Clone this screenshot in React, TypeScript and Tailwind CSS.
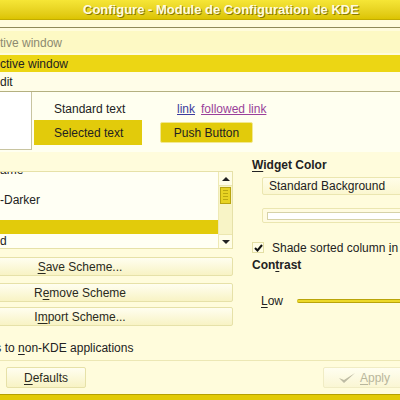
import React from "react";

const font = { fontFamily: '"Liberation Sans", Arial, sans-serif' };

function U({ children }: { children: React.ReactNode }) {
  return <span className="underline underline-offset-2">{children}</span>;
}

function KButton({ children, className = "" }: { children: React.ReactNode; className?: string }) {
  return (
    <div
      className={`flex items-center justify-center rounded-[2px] border border-[#e6e1a8] bg-gradient-to-b from-[#fffef0] to-[#f8f3c4] text-[#2a2a20] ${className}`}
    >
      <span>{children}</span>
    </div>
  );
}

export default function App() {
  return (
    <div className="w-[400px] h-[400px] overflow-hidden bg-[#fffcdc] text-[12px] leading-none text-[#222] flex flex-col" style={font}>
      {/* title bar */}
      <div className="h-[20px] shrink-0 flex items-center pl-[83px] bg-gradient-to-b from-[#f6e636] to-[#dcc400] border-b border-[#c2ac00]">
        <span className="font-bold text-[13px] text-[#fffbe0] whitespace-nowrap [text-shadow:1px_1px_0_#8a7a00]">
          Configure - Module de Configuration de KDE
        </span>
      </div>

      {/* preview */}
      <div className="mt-[7px] border-t border-[#8f8a58] shrink-0">
        <div className="h-[3px]" />
        <div className="h-[22px] bg-[#fdf9c4] flex items-center pt-[2px] text-[#8c8a70]">
          <span>tive window</span>
        </div>
        <div className="h-[2px]" />
        <div className="h-[17px] bg-[#ecd614] flex items-center text-[#222]">
          <span>ctive window</span>
        </div>
        <div className="h-[19px] bg-[#fffde8] flex items-center">
          <span>dit</span>
        </div>
        <div className="border-t border-[#b4b080] bg-[#fffff0] h-[61px] flex">
          <div className="w-[32px] h-[58px] bg-white border-r border-b border-[#c8c4a0]" />
          <div className="flex flex-col pt-[10px]">
            <div className="h-[14px] flex items-center pl-[22px] whitespace-nowrap">
              <span>Standard text</span>
            </div>
            <div className="mt-[4px] ml-[2px] w-[108px] h-[25px] bg-[#e2cb0b] flex items-center pl-[20px] whitespace-nowrap">
              <span>Selected text</span>
            </div>
          </div>
          <div className="flex flex-col pt-[10px] ml-[18px]">
            <div className="h-[14px] flex items-center gap-[6px] pl-[17px] whitespace-nowrap">
              <span className="text-[#3d3a9c] underline">link</span>
              <span className="text-[#9a3f9a] underline">followed link</span>
            </div>
            <div className="mt-[6px] w-[93px] h-[21px] bg-[#e2cb0b] border border-[#f2e890] rounded-[2px] flex items-center justify-center text-[#222] whitespace-nowrap">
              <span>Push Button</span>
            </div>
          </div>
        </div>
      </div>

      {/* main */}
      <div className="flex mt-[3px] shrink-0">
        <div className="w-[233px] flex flex-col">
          <div className="mt-[16px] h-[78px] border-t border-b border-r border-[#e6e1a8] bg-[#fffff4] flex overflow-hidden">
            <div className="flex-1 flex flex-col -mt-[9px]">
              <div className="h-[14px] flex items-center">
                <span>ame</span>
              </div>
              <div className="h-[16px]" />
              <div className="h-[14px] flex items-center">
                <span>-Darker</span>
              </div>
              <div className="h-[14px]" />
              <div className="h-[14px] bg-[#e2cb0b]" />
              <div className="h-[14px] flex items-center">
                <span>d</span>
              </div>
            </div>
            <div className="w-[14px] bg-[#f8f4c6] border-l border-[#eee9b4] flex flex-col justify-between">
              <div className="h-[14px] flex items-center justify-center bg-[#fffde6] border-b border-[#ece7b0]">
                <div className="w-0 h-0 border-l-[4px] border-r-[4px] border-b-[4px] border-l-transparent border-r-transparent border-b-[#222]" />
              </div>
              <div className="-mt-[30px] h-[17px] mx-[1px] bg-[#e8d323] border border-[#b8a410] flex flex-col justify-center gap-[2px] px-[2px]">
                <div className="h-px bg-[#bca810]" />
                <div className="h-px bg-[#bca810]" />
                <div className="h-px bg-[#bca810]" />
                <div className="h-px bg-[#bca810]" />
              </div>
              <div className="h-[14px] flex items-center justify-center bg-[#fffde6] border-t border-[#ece7b0]">
                <div className="w-0 h-0 border-l-[4px] border-r-[4px] border-t-[4px] border-l-transparent border-r-transparent border-t-[#222]" />
              </div>
            </div>
          </div>
          <KButton className="mt-[8px] h-[19px] -ml-[73px] w-[306px]">
            <U>S</U>ave Scheme...
          </KButton>
          <KButton className="mt-[7px] h-[19px] -ml-[73px] w-[306px]">
            R<U>e</U>move Scheme
          </KButton>
          <KButton className="mt-[5px] h-[19px] -ml-[73px] w-[306px]">
            I<U>m</U>port Scheme...
          </KButton>
          <div className="mt-[15px] h-[14px] flex items-center whitespace-nowrap -ml-[64px]">
            <span>
              Apply colors to <U>n</U>on-KDE applications
            </span>
          </div>
        </div>

        <div className="ml-[19px] flex-1 flex flex-col">
          <div className="mt-[3px] h-[13px] flex items-center font-bold whitespace-nowrap">
            <span>
              <U>W</U>idget Color
            </span>
          </div>
          <div className="mt-[6px] ml-[10px] h-[18px] w-[160px] border border-[#ebe6b0] rounded-[2px] bg-gradient-to-b from-[#fffde8] to-[#fbf7d0] flex items-center pl-[6px] whitespace-nowrap">
            <span>Standard Background</span>
          </div>
          <div className="mt-[13px] ml-[10px] h-[15px] w-[160px] border border-[#ebe6b0] rounded-[2px] bg-[#fffbe0] flex items-center pl-[4px]">
            <div className="h-[8px] flex-1 bg-white border border-[#d6d2a8]" />
          </div>
          <div className="mt-[19px] h-[11px] flex items-center whitespace-nowrap">
            <div className="w-[12px] h-[11px] border border-[#e3dea4] bg-[#fffde4] flex items-center justify-center mr-[8px] shrink-0">
              <svg width="9" height="8" viewBox="0 0 9 8">
                <path d="M1 4 L3.5 6.5 L8 1" stroke="#111" strokeWidth="2" fill="none" />
              </svg>
            </div>
            <span>
              Shade sorted column <U>i</U>n
            </span>
          </div>
          <div className="mt-[5px] h-[13px] flex items-center font-bold whitespace-nowrap">
            <span>
              Con<U>t</U>rast
            </span>
          </div>
          <div className="mt-[24px] h-[12px] flex items-center whitespace-nowrap pl-[9px]">
            <span>
              <U>L</U>ow
            </span>
            <div className="ml-[14px] w-[110px] h-[4px] bg-[#ecd82a] border-t border-b border-[#b9a40a] rounded-l-[2px] shrink-0" />
          </div>
        </div>
      </div>

      {/* bottom */}
      <div className="mt-[5px] border-t border-[#ece7b4] shrink-0 flex justify-between pt-[6px]">
        <KButton className="ml-[6px] w-[80px] h-[21px]">
          <U>D</U>efaults
        </KButton>
        <div className="w-[80px] h-[21px] -mr-[3px] rounded-[2px] border border-[#f0ecc4] bg-gradient-to-b from-[#fffef0] to-[#faf6d4] flex items-center pl-[14px] gap-[4px] text-[#b8b69c]">
          <svg width="18" height="12" viewBox="0 0 18 12">
            <path d="M1 6 L6 11 L17 1 L6 8 Z" fill="#bdbba4" />
          </svg>
          <span>
            <U>A</U>pply
          </span>
        </div>
      </div>
      <div className="mt-auto h-[6px] bg-[#e2ca06] border-t border-[#b5a000]" />
    </div>
  );
}
